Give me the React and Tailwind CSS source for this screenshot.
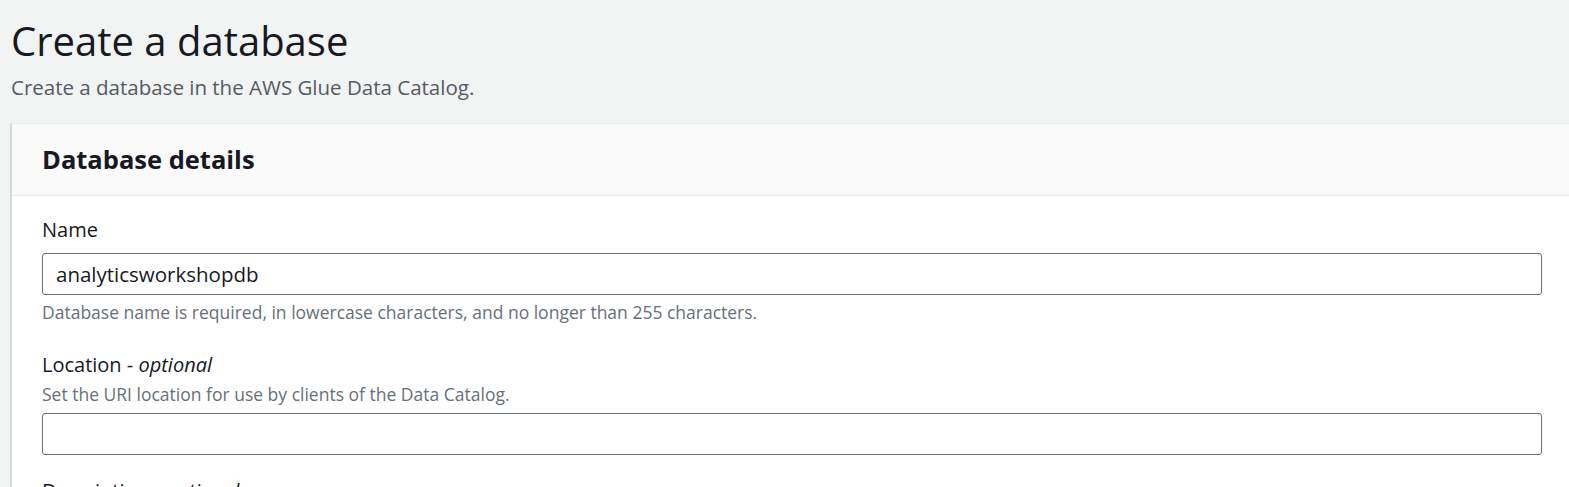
const Field = ({ label, optional, description, value, help, last }) => (
  <div className={last ? "" : help ? "mb-[27px]" : "mb-[22px]"}>
    <label className="block text-[20px] leading-[28px] text-[#16191f]">
      {label}
      {optional && (
        <>
          {" - "}
          <i>optional</i>
        </>
      )}
    </label>
    {description && (
      <p className="mt-[3px] text-[17.5px] leading-[24px] text-[#687078]">{description}</p>
    )}
    <div
      className={`${description ? "mt-[7px]" : "mt-[9px]"} mr-[27px] flex h-[42px] items-center rounded-[3px] border border-[#687078] bg-white px-[13px] text-[20.5px] text-[#16191f]`}
    >
      {value}
    </div>
    {help && (
      <p className="mt-[5px] text-[17.5px] leading-[24px] text-[#687078]">{help}</p>
    )}
  </div>
);

export default function App() {
  return (
    <div className="h-screen overflow-hidden bg-[#f2f3f3] font-['Open_Sans',sans-serif]">
      <div className="pl-[11px] pt-[16px]">
        <h1 className="mb-[7px] text-[40px] leading-[50px] text-[#16191f]">Create a database</h1>
        <p className="text-[20.5px] leading-[28px] text-[#545b64]">
          Create a database in the AWS Glue Data Catalog.
        </p>
      </div>
      <div className="ml-[10px] mt-[22px] border-l-2 border-t border-l-[#d5dbdb] border-t-[#eaeded] bg-white">
        <div className="flex h-[72px] items-center border-b border-[#eaeded] bg-[#fafafa] px-[30px]">
          <h2 className="text-[25.5px] font-bold text-[#16191f]">Database details</h2>
        </div>
        <div className="pl-[30px] pt-[20px]">
          <Field
            label="Name"
            value="analyticsworkshopdb"
            help="Database name is required, in lowercase characters, and no longer than 255 characters."
          />
          <Field
            label="Location"
            optional
            description="Set the URI location for use by clients of the Data Catalog."
          />
          <Field label="Description" optional last />
        </div>
      </div>
    </div>
  );
}
